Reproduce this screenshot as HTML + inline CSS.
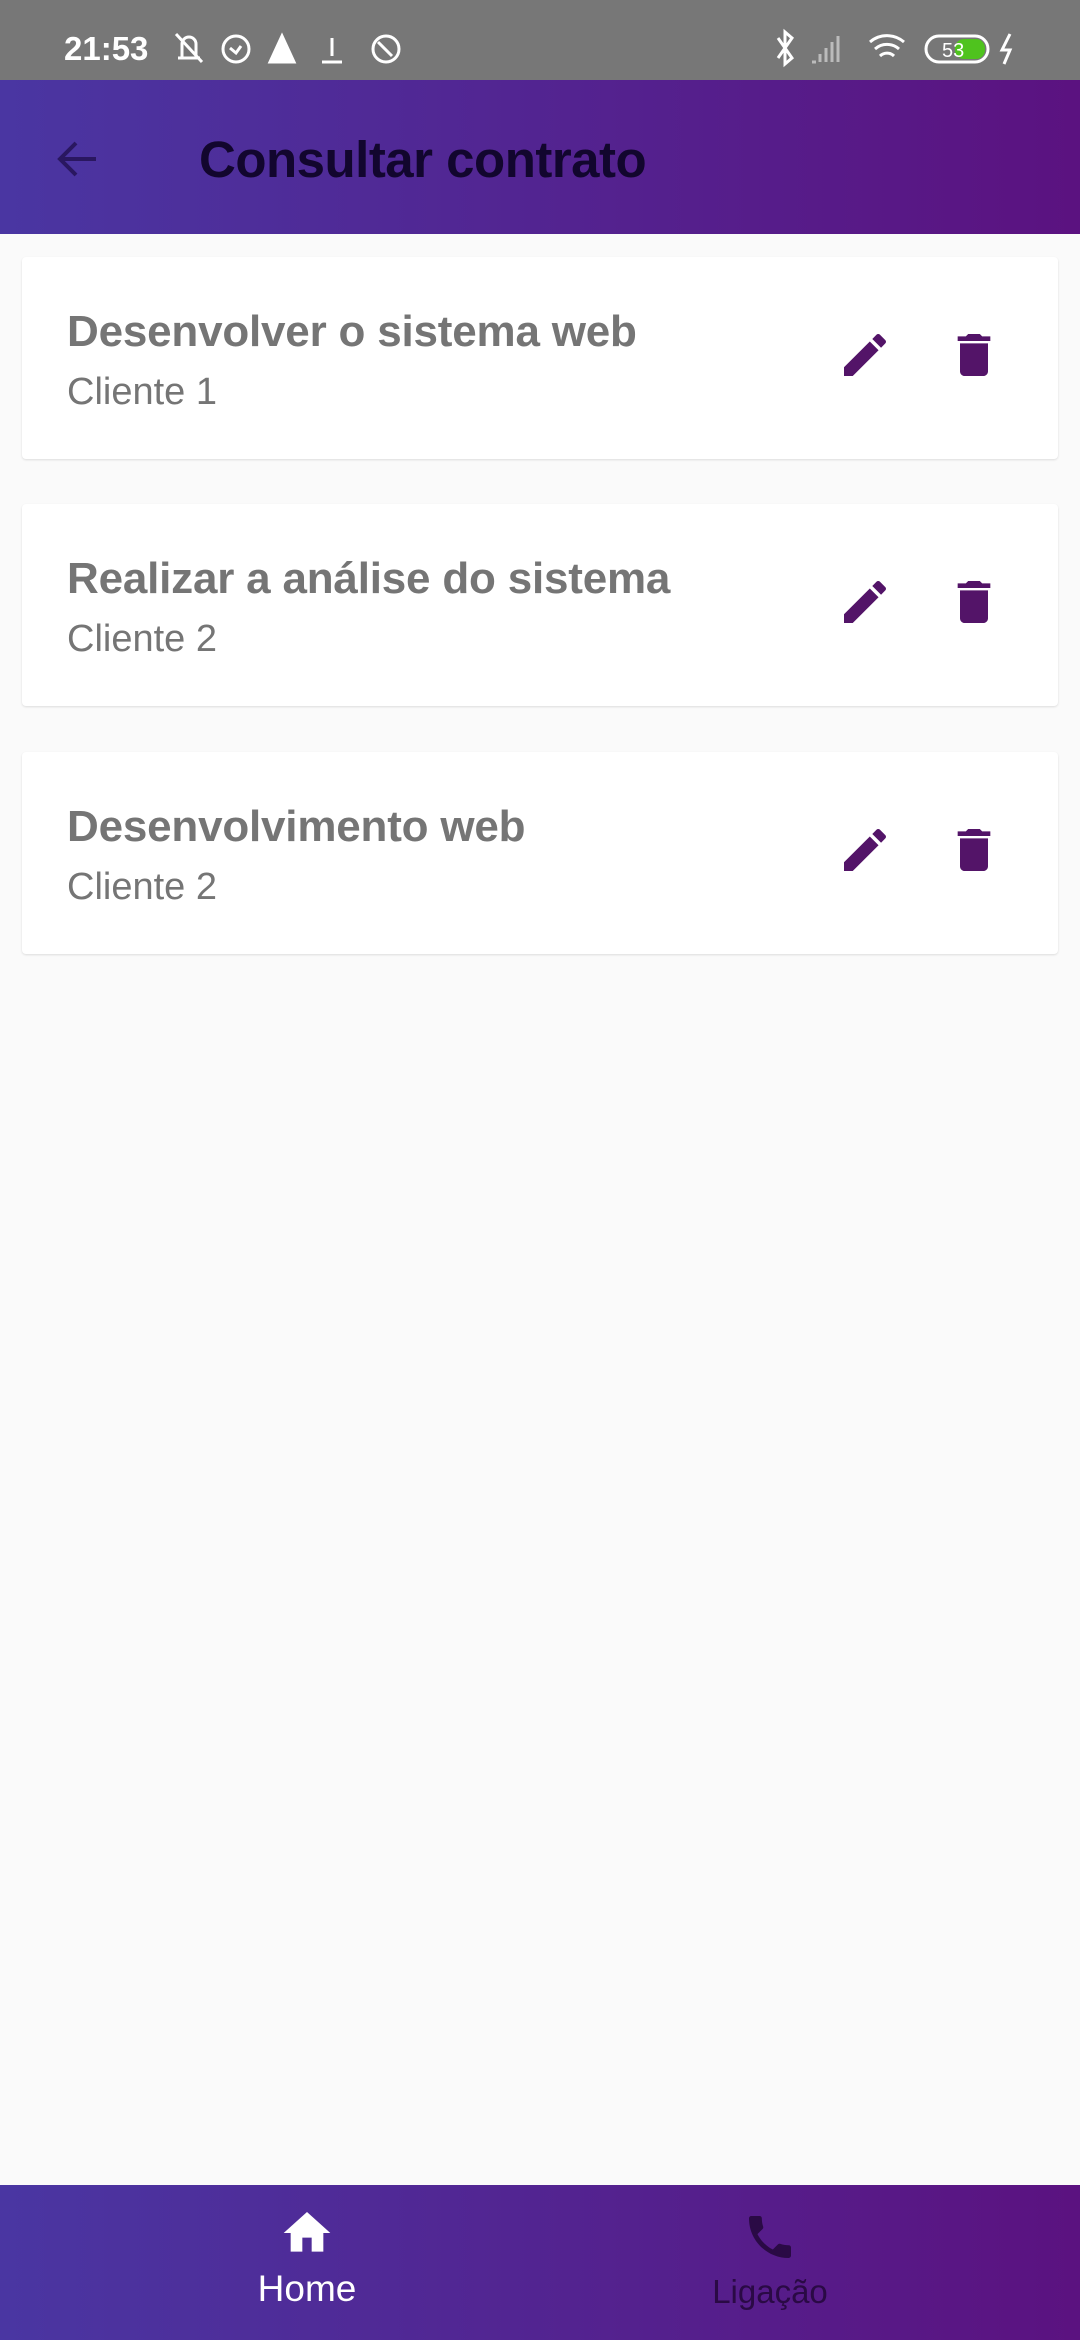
<!DOCTYPE html>
<html><head><meta charset="utf-8"><style>
*{margin:0;padding:0;box-sizing:border-box}
body{width:1080px;height:2340px;background:#fafafa;font-family:"Liberation Sans",sans-serif;position:relative;overflow:hidden}
.sb{position:absolute;left:0;top:0;width:1080px;height:80px;background:#777;color:#fff}
.sb .t{position:absolute;left:64px;top:30px;font-size:33px;font-weight:bold}
.ab{position:absolute;left:0;top:80px;width:1080px;height:154px;background:linear-gradient(90deg,#4a36a2,#5b1280)}
.ab .ti{position:absolute;left:199px;top:50px;font-size:51px;color:#12062e;font-weight:bold;letter-spacing:-0.5px}
.card{position:absolute;left:22px;width:1036px;height:202px;background:#fff;border-radius:4px;box-shadow:0 1px 2px rgba(0,0,0,.12)}
.card .h{position:absolute;left:45px;top:50px;font-size:44px;font-weight:bold;color:#757575;letter-spacing:-0.2px}
.card .s{position:absolute;left:45px;top:114px;font-size:38px;color:#757575}
.card svg{position:absolute;top:70px}
.bn{position:absolute;left:0;top:2185px;width:1080px;height:155px;background:linear-gradient(90deg,#4a36a2,#5b1280)}
</style></head><body>
<div class="sb"><span class="t">21:53</span>
<svg style="position:absolute;left:170px;top:28px" width="260" height="40" fill="none" stroke="#fff" stroke-width="3"><path d="M8 30h22M12 30V16a7 7 0 0 1 14 0v14M6 6l26 28"/><circle cx="66" cy="21" r="13"/><path d="M60 20l6 5 5-7"/><path d="M100 34l12-26 12 26z" fill="#fff"/><path d="M162 10v18M152 34h20"/><circle cx="216" cy="21" r="13"/><path d="M208 14l14 14"/></svg>
<svg style="position:absolute;left:770px;top:28px" width="260" height="40" fill="none" stroke="#fff" stroke-width="3"><path d="M8 10l14 20-7 6V4l7 6-14 20"/><path d="M42 34h4M50 34v-8M56 34v-14M62 34v-20M68 34v-26" stroke="#bbb"/><path d="M100 14a26 26 0 0 1 34 0M105 21a18 18 0 0 1 24 0M110 28a10 10 0 0 1 14 0"/><rect x="156" y="8" width="62" height="26" rx="13"/><rect x="185" y="11" width="30" height="20" rx="9" fill="#4fc31e" stroke="none"/><text x="172" y="29" fill="#fff" stroke="none" font-size="20" font-family="Liberation Sans">53</text><path d="M240 6l-8 16h8l-6 14" /></svg>
</div>
<div class="ab">
<svg style="position:absolute;left:54px;top:55px" width="48" height="48" fill="none" stroke="#2a1760" stroke-width="4"><path d="M42 24H8M22 8L6 24l16 16"/></svg>
<div class="ti">Consultar contrato</div></div>

<div class="card" style="top:257px"><div class="h">Desenvolver o sistema web</div><div class="s">Cliente 1</div>
<svg style="left:815px" width="56" height="56" viewBox="0 0 24 24"><path fill="#531468" d="M3 17.25V21h3.75L17.81 9.94l-3.75-3.75L3 17.25zM20.71 7.04a1 1 0 0 0 0-1.41l-2.34-2.34a1 1 0 0 0-1.41 0l-1.83 1.83 3.75 3.75 1.83-1.83z"/></svg>
<svg style="left:924px" width="56" height="56" viewBox="0 0 24 24"><path fill="#531468" d="M6 19c0 1.1.9 2 2 2h8c1.1 0 2-.9 2-2V7H6v12zM19 4h-3.5l-1-1h-5l-1 1H5v2h14V4z"/></svg></div>

<div class="card" style="top:504px"><div class="h">Realizar a análise do sistema</div><div class="s">Cliente 2</div>
<svg style="left:815px" width="56" height="56" viewBox="0 0 24 24"><path fill="#531468" d="M3 17.25V21h3.75L17.81 9.94l-3.75-3.75L3 17.25zM20.71 7.04a1 1 0 0 0 0-1.41l-2.34-2.34a1 1 0 0 0-1.41 0l-1.83 1.83 3.75 3.75 1.83-1.83z"/></svg>
<svg style="left:924px" width="56" height="56" viewBox="0 0 24 24"><path fill="#531468" d="M6 19c0 1.1.9 2 2 2h8c1.1 0 2-.9 2-2V7H6v12zM19 4h-3.5l-1-1h-5l-1 1H5v2h14V4z"/></svg></div>

<div class="card" style="top:752px"><div class="h">Desenvolvimento web</div><div class="s">Cliente 2</div>
<svg style="left:815px" width="56" height="56" viewBox="0 0 24 24"><path fill="#531468" d="M3 17.25V21h3.75L17.81 9.94l-3.75-3.75L3 17.25zM20.71 7.04a1 1 0 0 0 0-1.41l-2.34-2.34a1 1 0 0 0-1.41 0l-1.83 1.83 3.75 3.75 1.83-1.83z"/></svg>
<svg style="left:924px" width="56" height="56" viewBox="0 0 24 24"><path fill="#531468" d="M6 19c0 1.1.9 2 2 2h8c1.1 0 2-.9 2-2V7H6v12zM19 4h-3.5l-1-1h-5l-1 1H5v2h14V4z"/></svg></div>

<div class="bn">
<svg style="position:absolute;left:279px;top:20px" width="56" height="56" viewBox="0 0 24 24"><path fill="#fff" d="M10 20v-6h4v6h5v-8h3L12 3 2 12h3v8z"/></svg>
<div style="position:absolute;left:0;width:614px;text-align:center;top:83px;font-size:37px;color:#fff">Home</div>
<svg style="position:absolute;left:742px;top:24px" width="56" height="56" viewBox="0 0 24 24"><path fill="#2a0a45" d="M6.62 10.79c1.44 2.830 3.76 5.14 6.59 6.59l2.2-2.2c.27-.27.67-.36 1.02-.24 1.12.37 2.33.57 3.57.57.55 0 1 .45 1 1V20c0 .55-.45 1-1 1C10.61 21 3 13.39 3 4c0-.55.45-1 1-1h3.5c.55 0 1 .45 1 1 0 1.25.2 2.45.57 3.57.11.35.03.74-.25 1.02l-2.2 2.2z"/></svg>
<div style="position:absolute;left:670px;width:200px;text-align:center;top:88px;font-size:33px;color:#2a0a45">Ligação</div>
</div>
</body></html>
